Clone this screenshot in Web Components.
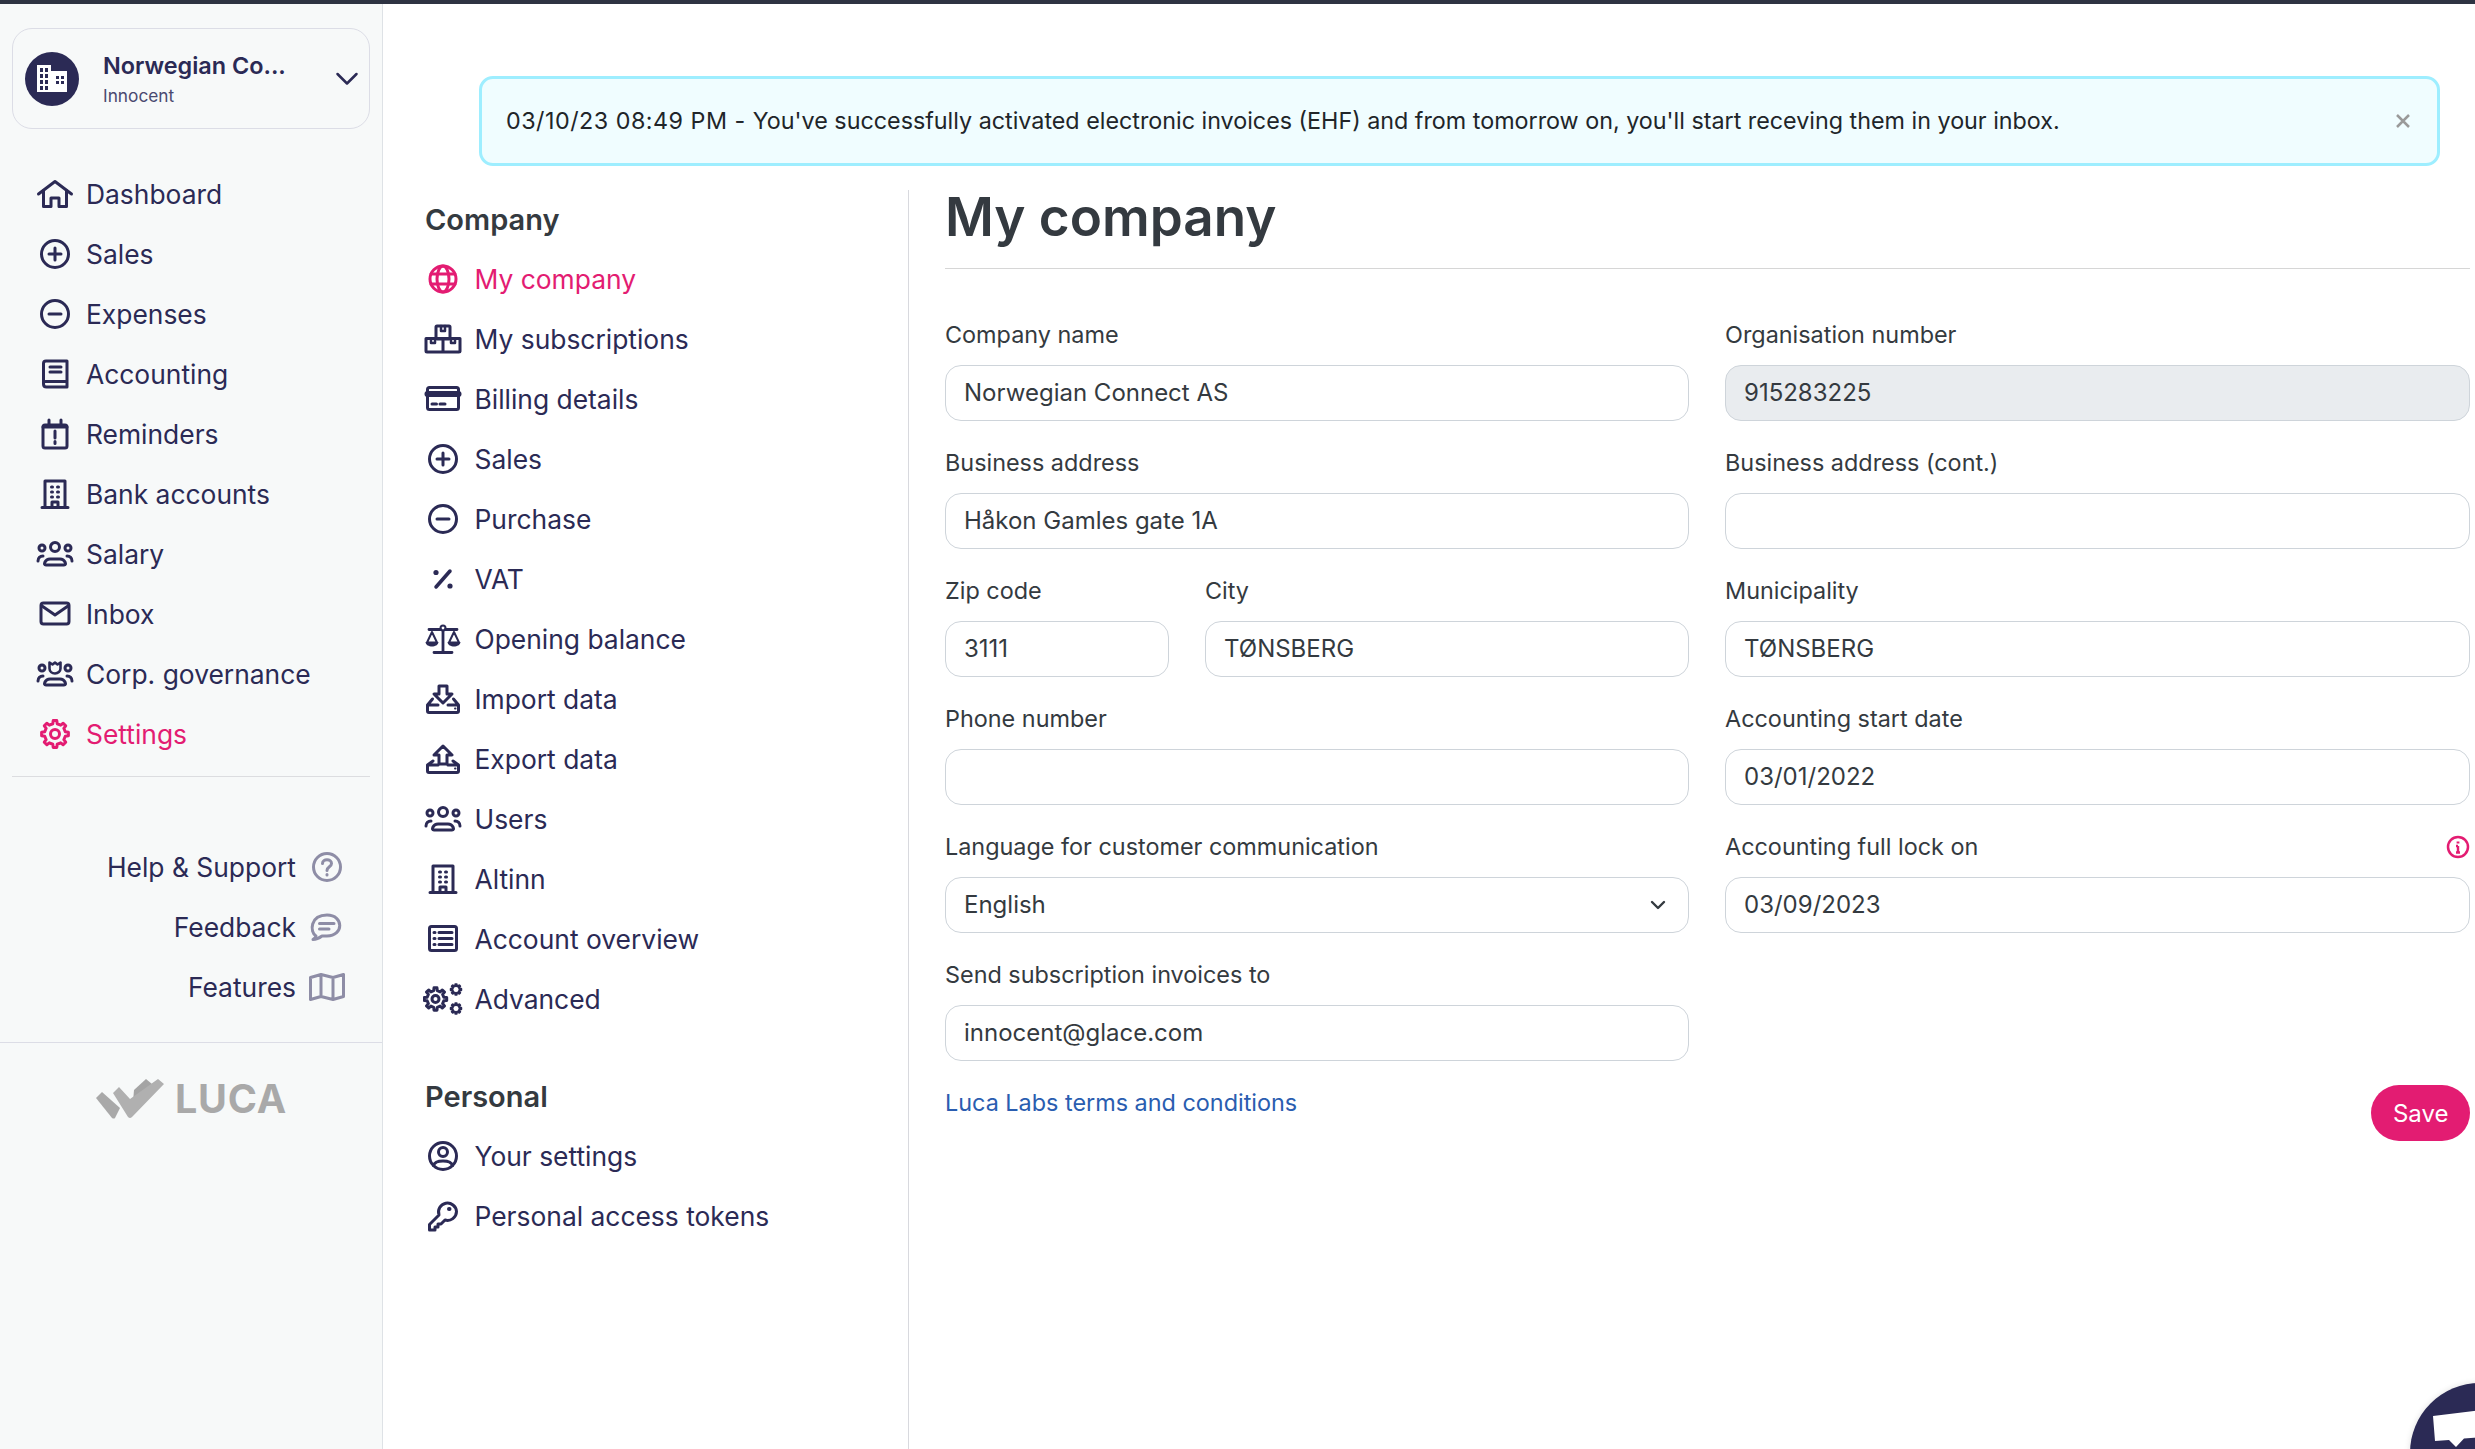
<!DOCTYPE html>
<html lang="en">
<head>
<meta charset="utf-8">
<title>My company</title>
<style>
  html, body { margin: 0; height: 100%; overflow: hidden; background: #fff; }
  body { font-family: Inter, "Liberation Sans", sans-serif; }
</style>
</head>
<body>
<luca-app></luca-app>
<script>
const gear = (cx, cy, r, t, n = 8) => {
  let d = '';
  const step = Math.PI * 2 / n;
  for (let i = 0; i < n; i++) {
    const a = i * step - Math.PI / 2;
    const pts = [[r, a - step * 0.27], [r + t, a - step * 0.17], [r + t, a + step * 0.17], [r, a + step * 0.27]];
    pts.forEach((p, k) => {
      const x = (cx + p[0] * Math.cos(p[1])).toFixed(2);
      const y = (cy + p[0] * Math.sin(p[1])).toFixed(2);
      d += (i === 0 && k === 0 ? 'M' : 'L') + x + ' ' + y + ' ';
    });
  }
  return d + 'Z';
};

const users = `<circle cx="7" cy="10" r="3"/><circle cx="33" cy="10" r="3"/>
  <path d="M3 23c0-3 2-5 5-5M37 23c0-3-2-5-5-5"/>
  <path d="M11 27c-1.500 0-2-1-1-3 1-2 3-3 5-3h10c2 0 4 1 5 3 1 2 .5 3-1 3z"/>`;

const icons = {
  home: `<path d="M3.500 16 20 3.500 36.500 16"/><path d="M8.500 12.500V28.500H16V20H24V28.500H31.500V12.500"/>`,
  plus: `<circle cx="20" cy="16" r="13.500"/><path d="M20 10V22M14 16H26"/>`,
  minus: `<circle cx="20" cy="16" r="13.500"/><path d="M14 16H26"/>`,
  book: `<path d="M8.500 26V5.500Q8.500 3 11 3H32V29H11.500Q8.500 29 8.500 26T11.500 23.500H32"/><path d="M15 9H26M15 14H26"/>`,
  calendar: `<rect x="8" y="7" width="24" height="23" rx="2"/><path d="M14 2V8M26 2V8M8 9H32" /><path d="M20 13V20M20 23.500V25.500"/>`,
  building: `<path d="M7 29.500H33M10 29V3H30V29M17 29V24H23V29"/><path d="M16.500 9H17.500M22.500 9H23.500M16.500 14H17.500M22.500 14H23.500M16.500 19H17.500M22.500 19H23.500" stroke-width="3"/>`,
  users: `<circle cx="20" cy="9" r="4.500"/>${users}`,
  envelope: `<rect x="6" y="5" width="28" height="21" rx="2.500"/><path d="M7 8 20 17 33 8"/>`,
  corp: `<path d="M14.500 4.500 17.500 6.500 20 4.500 22.500 6.500 25.500 4.500V10.500A5.500 5 0 0 1 14.500 10.500Z" stroke-width="2.600"/>${users}`,
  gear: `<path d="${gear(20, 16, 10.500, 3)}"/><circle cx="20" cy="16" r="4.500"/>`,
  globe: `<circle cx="20" cy="16" r="13"/><ellipse cx="20" cy="16" rx="6" ry="13"/><path d="M8 11H32M8 21H32"/>`,
  boxes: `<rect x="13" y="3" width="14" height="13" rx="1"/><path d="M3 15.500H37V28.500Q37 29 36 29H4Q3 29 3 28V16ZM20 16V29" stroke-width="3"/><path d="M18 3V8H22V3M8 16V20H12V16M28 16V20H32V16" stroke-width="2.500"/>`,
  card: `<rect x="4.500" y="4.500" width="31" height="22" rx="2"/><path d="M4.500 11H35.500" stroke-width="6"/><path d="M9 21H13.500M17 21H22" stroke-width="3"/>`,
  percent: `<path d="M27 8 13 24" stroke-width="3.500"/><circle cx="13" cy="9.500" r="2.600" fill="currentColor" stroke="none"/><circle cx="27" cy="23" r="2.600" fill="currentColor" stroke="none"/>`,
  scales: `<circle cx="20" cy="5" r="2.500" stroke-width="2"/><path d="M20 8V29M11 29.500H29M6 6.500H17.500M22.500 6.500H34" stroke-width="2.800"/><path d="M9 9 4 19.500H14Z M31 9 26 19.500H36Z" stroke-width="2"/><path d="M2.500 19H15.500C15 25 3 25 2.500 19ZM24.500 19H37.500C37 25 25 25 24.500 19Z" fill="currentColor" stroke="none"/>`,
  import: `<path d="M16 3H24V11H29L20 20 11 11H16Z"/><path d="M9.500 16 4.500 22V28Q4.500 29.500 6 29.500H34Q35.500 29.500 35.500 28V22L30.500 16M5 22H15M25 22H35"/><path d="M32 25.500h.5" stroke-width="2"/>`,
  export: `<path d="M20 3 29 12H24V21H16V12H11Z"/><path d="M10 18 4.500 22V28Q4.500 29.500 6 29.500H34Q35.500 29.500 35.500 28V22L30 18M5 22H15M25 22H35"/><path d="M32 25.500h.5" stroke-width="2"/>`,
  list: `<rect x="6.500" y="3.500" width="27" height="24" rx="2"/><path d="M11 9.500H12M11 15.500H12M11 21.500H12M16 9.500H29M16 15.500H29M16 21.500H29"/>`,
  advanced: `<path d="${gear(12.500, 16, 8.500, 2.800)}"/><circle cx="12.500" cy="16" r="3.500"/><path d="${gear(33, 6.500, 3.500, 1.800)}" stroke-width="2"/><path d="${gear(33, 25.500, 3.500, 1.800)}" stroke-width="2"/>`,
  user: `<circle cx="20" cy="16" r="13.500"/><circle cx="20" cy="12" r="4.500"/><path d="M10.500 25.500C12 19.500 28 19.500 29.500 25.500"/>`,
  key: `<path d="M33.500 11.500A9 9 0 1 0 16 15L6.500 24.500V30H12V27H15V24H18L22 20A9 9 0 0 0 33.500 11.500Z"/><path d="M26 9h.5" stroke-width="4"/>`,
  help: `<circle cx="20" cy="16" r="13.500"/><path d="M15.500 12.500C15.500 7.500 24.500 7.500 24.500 12.500 24.500 16 20 15.500 20 19.500M20 23.500V24"/>`,
  comment: `<path d="M9 25C2.500 21 3 4 20 4 37 4 37 25 20 25H15C13 26.500 10 28.500 6 28.500 7.500 27.500 8.500 26.500 9 25Z"/><path d="M12.500 12.500H27M12.500 18H22"/>`,
  map: `<path d="M3.500 6.500 14 3.500 26 6.500 36.500 3.500V25.500L26 28.500 14 25.500 3.500 28.500ZM14 3.500V25.500M26 6.500V28.500"/>`
};

class LucaIcon extends HTMLElement {
  connectedCallback() {
    const root = this.attachShadow({ mode: 'open' });
    root.innerHTML = `
      <style>
        :host { display: block; width: 40px; height: 32px; flex: none; }
        svg { display: block; fill: none; stroke: currentColor; stroke-width: 3; stroke-linecap: round; stroke-linejoin: round; }
      </style>
      <svg viewBox="0 0 40 32" width="40" height="32">${icons[this.getAttribute('name')] || ''}</svg>`;
  }
}

class NavItem extends HTMLElement {
  connectedCallback() {
    const root = this.attachShadow({ mode: 'open' });
    root.innerHTML = `
      <style>
        :host { display: flex; align-items: center; height: 60px; gap: var(--nav-gap, 11px); color: #2b2a55; font-size: 26.400px; }
        :host([active]) { color: #e31c72; }
      </style>
      <luca-icon name="${this.getAttribute('icon')}"></luca-icon>
      <slot></slot>`;
  }
}

class FootLink extends HTMLElement {
  connectedCallback() {
    const root = this.attachShadow({ mode: 'open' });
    root.innerHTML = `
      <style>
        :host { display: flex; align-items: center; justify-content: flex-end; height: 60px; gap: 11px; color: #2b2a55; font-size: 26.400px; }
        luca-icon { color: #8e8da6; }
      </style>
      <slot></slot>
      <luca-icon name="${this.getAttribute('icon')}"></luca-icon>`;
  }
}

class CompanySwitcher extends HTMLElement {
  connectedCallback() {
    const root = this.attachShadow({ mode: 'open' });
    root.innerHTML = `
      <style>
        :host { display: flex; align-items: center; box-sizing: border-box; height: 101px; padding: 0 10px 0 12px; border: 1px solid #dcdde6; border-radius: 20px; color: #2b2a55; }
        .avatar { width: 54px; height: 54px; border-radius: 50%; background: #2b2a55; flex: none; }
        .text { margin-left: 24px; flex: 1; }
        .name { font-size: 23.400px; font-weight: 600; line-height: 34px; }
        .sub { font-size: 17.300px; line-height: 26px; color: #4a4970; }
      </style>
      <svg class="avatar" viewBox="0 0 54 54">
        <path fill="#fff" fill-rule="evenodd" d="M12 13H26V19H42V40H12Z M15 16V20H18V16Z M20 16V20H23V16Z M15 22V26H18V22Z M20 22V26H23V22Z M15 28V32H18V28Z M20 28V32H23V28Z M15 34V38H18V34Z M20 34V38H23V34Z M31 24V27H34V24Z M36 24V27H39V24Z M31 29V32H34V29Z M36 29V32H39V29Z"/>
      </svg>
      <div class="text">
        <div class="name">Norwegian Co...</div>
        <div class="sub">Innocent</div>
      </div>
      <svg width="24" height="16" viewBox="0 0 24 16" fill="none" stroke="#2b2a55" stroke-width="2.500" stroke-linecap="round" stroke-linejoin="round"><path d="M2.500 3 12 12.500 21.500 3"/></svg>`;
  }
}

class LucaLogo extends HTMLElement {
  connectedCallback() {
    const root = this.attachShadow({ mode: 'open' });
    root.innerHTML = `
      <style>
        :host { display: flex; align-items: center; justify-content: center; gap: 10px; height: 42px; color: #a9a9a9; font-size: 39.500px; font-weight: 700; letter-spacing: .8px; }
      </style>
      <svg width="70" height="42" viewBox="0 0 70 42">
        <path fill="#a4a4a4" d="M39 12 51 1 57 6 38 24Z"/>
        <path fill="#a9a9a9" d="M1 20 7 14 25 30 20 40 Q19 41 17 40 Z"/>
        <path fill="#b0b0b0" d="M18 15 24 9 35 21 63 1 69 6 37 39 Q35 41 33 39Z"/>
      </svg>
      <span>LUCA</span>`;
  }
}

class LucaSidebar extends HTMLElement {
  connectedCallback() {
    const root = this.attachShadow({ mode: 'open' });
    root.innerHTML = `
      <style>
        :host { display: block; box-sizing: border-box; width: 383px; flex: none; background: #f7f9f9; border-right: 1px solid #dee2e6; }
        .top { padding: 24px 12px 0; }
        nav { margin-top: 35px; padding-left: 23px; }
        .rule { height: 1px; background: #dcdde0; margin-top: 12px; }
        .foot { margin-top: 60px; padding-right: 35px; }
        .rule-wide { height: 1px; background: #dcdde6; margin-top: 25px; }
        luca-logo { margin-top: 35px; }
      </style>
      <div class="top">
        <company-switcher></company-switcher>
        <nav>
          <nav-item icon="home">Dashboard</nav-item>
          <nav-item icon="plus">Sales</nav-item>
          <nav-item icon="minus">Expenses</nav-item>
          <nav-item icon="book">Accounting</nav-item>
          <nav-item icon="calendar">Reminders</nav-item>
          <nav-item icon="building">Bank accounts</nav-item>
          <nav-item icon="users">Salary</nav-item>
          <nav-item icon="envelope">Inbox</nav-item>
          <nav-item icon="corp">Corp. governance</nav-item>
          <nav-item icon="gear" active>Settings</nav-item>
        </nav>
        <div class="rule"></div>
      </div>
      <div class="foot">
        <foot-link icon="help">Help &amp; Support</foot-link>
        <foot-link icon="comment">Feedback</foot-link>
        <foot-link icon="map">Features</foot-link>
      </div>
      <div class="rule-wide"></div>
      <luca-logo></luca-logo>`;
  }
}

class AlertBanner extends HTMLElement {
  connectedCallback() {
    const root = this.attachShadow({ mode: 'open' });
    root.innerHTML = `
      <style>
        :host { display: flex; align-items: center; justify-content: space-between; box-sizing: border-box; height: 90px; padding: 0 27px 0 24px; background: #f0fdff; border: 3px solid #9eeeff; border-radius: 14px; color: #212529; font-size: 23.300px; }
        span { margin-top: -2px; }
        svg { flex: none; }
        ::slotted(time) { letter-spacing: .5px; }
      </style>
      <span><slot></slot></span>
      <svg width="14" height="14" viewBox="0 0 14 14" stroke="#9a9a9a" stroke-width="2.500"><path d="M1 1 13 13M13 1 1 13"/></svg>`;
  }
}

class SettingsMenu extends HTMLElement {
  connectedCallback() {
    const root = this.attachShadow({ mode: 'open' });
    root.innerHTML = `
      <style>
        :host { display: block; box-sizing: border-box; width: 526px; flex: none; padding-left: 42px; border-right: 1px solid #d8d9de; --nav-gap: 11.500px; }
        h3 { margin: 0; height: 59px; line-height: 60px; color: #343a40; font-size: 29px; font-weight: 600; }
        nav-item { margin-left: -2px; }
        .personal { margin-top: 38px; }
      </style>
      <h3>Company</h3>
      <nav-item icon="globe" active>My company</nav-item>
      <nav-item icon="boxes">My subscriptions</nav-item>
      <nav-item icon="card">Billing details</nav-item>
      <nav-item icon="plus">Sales</nav-item>
      <nav-item icon="minus">Purchase</nav-item>
      <nav-item icon="percent">VAT</nav-item>
      <nav-item icon="scales">Opening balance</nav-item>
      <nav-item icon="import">Import data</nav-item>
      <nav-item icon="export">Export data</nav-item>
      <nav-item icon="users">Users</nav-item>
      <nav-item icon="building">Altinn</nav-item>
      <nav-item icon="list">Account overview</nav-item>
      <nav-item icon="advanced">Advanced</nav-item>
      <h3 class="personal">Personal</h3>
      <nav-item icon="user">Your settings</nav-item>
      <nav-item icon="key">Personal access tokens</nav-item>`;
  }
}

class FormField extends HTMLElement {
  connectedCallback() {
    const root = this.attachShadow({ mode: 'open' });
    const value = this.getAttribute('value') || '';
    const chevron = this.hasAttribute('select')
      ? `<svg class="chev" width="16" height="10" viewBox="0 0 16 10" fill="none" stroke="#343a40" stroke-width="2.400" stroke-linecap="round" stroke-linejoin="round"><path d="M2 2 8 8 14 2"/></svg>`
      : '';
    const info = this.hasAttribute('info')
      ? `<svg width="24" height="24" viewBox="0 0 24 24" fill="none" stroke="#e31c72" stroke-width="2.500"><circle cx="12" cy="12" r="10"/><path d="M12 11V17M10 11H12M10 17.500H14" stroke-width="2.400"/><path d="M12 6.500V8.500" stroke-width="2.800"/></svg>`
      : '';
    root.innerHTML = `
      <style>
        :host { display: block; min-width: 0; }
        .label { display: flex; justify-content: space-between; align-items: center; height: 31px; margin-bottom: 15px; color: #343a40; font-size: 23.400px; }
        .box { display: flex; align-items: center; justify-content: space-between; box-sizing: border-box; height: 56px; padding: 0 18px 1px; background: #fff; border: 1px solid #ced4da; border-radius: 16px; color: #343a40; font-size: 24px; }
        .chev { margin-right: 4px; }
        :host([disabled]) .box { background: #e9ecef; }
      </style>
      <div class="label"><span>${this.getAttribute('label')}</span>${info}</div>
      <div class="box"><span>${value}</span>${chevron}</div>`;
  }
}

class CompanyForm extends HTMLElement {
  connectedCallback() {
    const root = this.attachShadow({ mode: 'open' });
    root.innerHTML = `
      <style>
        :host { display: block; flex: 1; min-width: 0; padding: 0 5px 0 36px; }
        h1 { margin: 0; height: 78px; line-height: 54px; border-bottom: 1px solid #d6d6d6; color: #343a40; font-size: 53px; font-weight: 600; }
        .grid { display: grid; grid-template-columns: 744px 1fr; gap: 26px 36px; margin-top: 50px; }
        .pair { display: grid; grid-template-columns: 224px 1fr; gap: 36px; }
        .first { grid-column: 1; }
        .foot { display: flex; justify-content: space-between; align-items: flex-start; margin-top: 24px; }
        .terms { color: #2a5db0; font-size: 23.400px; line-height: 35px; }
        .save { display: flex; align-items: center; height: 56px; padding: 0 21.500px; border-radius: 28px; background: #e31c72; color: #fff; font-size: 24px; }
      </style>
      <h1>My company</h1>
      <div class="grid">
        <form-field label="Company name" value="Norwegian Connect AS"></form-field>
        <form-field label="Organisation number" value="915283225" disabled></form-field>
        <form-field label="Business address" value="Håkon Gamles gate 1A"></form-field>
        <form-field label="Business address (cont.)"></form-field>
        <div class="pair">
          <form-field label="Zip code" value="3111"></form-field>
          <form-field label="City" value="TØNSBERG"></form-field>
        </div>
        <form-field label="Municipality" value="TØNSBERG"></form-field>
        <form-field label="Phone number"></form-field>
        <form-field label="Accounting start date" value="03/01/2022"></form-field>
        <form-field label="Language for customer communication" value="English" select></form-field>
        <form-field label="Accounting full lock on" value="03/09/2023" info></form-field>
        <form-field class="first" label="Send subscription invoices to" value="innocent@glace.com"></form-field>
      </div>
      <div class="foot">
        <span class="terms">Luca Labs terms and conditions</span>
        <span class="save">Save</span>
      </div>`;
  }
}

class ChatLauncher extends HTMLElement {
  connectedCallback() {
    const root = this.attachShadow({ mode: 'open' });
    root.innerHTML = `
      <style>
        :host { position: fixed; left: 2410px; top: 1383px; width: 140px; height: 140px; border-radius: 50%; background: #2b2a55; box-shadow: 0 0 6px rgba(0,0,0,.12); }
        svg { position: absolute; left: 20px; top: 26px; }
      </style>
      <svg width="70" height="50" viewBox="0 0 70 50"><path fill="#fff" d="M3 7 52 1 54 28 34 29.500 26 38 19 31 5 32Z"/></svg>`;
  }
}

class LucaApp extends HTMLElement {
  connectedCallback() {
    const root = this.attachShadow({ mode: 'open' });
    root.innerHTML = `
      <style>
        :host { display: flex; flex-direction: column; height: 100vh; overflow: hidden; font-family: Inter, "Liberation Sans", sans-serif; }
        .bar { height: 4px; background: #2e3342; flex: none; }
        .body { display: flex; flex: 1; min-height: 0; }
        main { display: flex; flex-direction: column; flex: 1; min-width: 0; }
        alert-banner { margin: 72px 35px 24px 96px; }
        .cols { display: flex; flex: 1; }
      </style>
      <div class="bar"></div>
      <div class="body">
        <luca-sidebar></luca-sidebar>
        <main>
          <alert-banner><time>03/10/23 08:49 PM - </time>You've successfully activated electronic invoices (EHF) and from tomorrow on, you'll start receving them in your inbox.</alert-banner>
          <div class="cols">
            <settings-menu></settings-menu>
            <company-form></company-form>
          </div>
        </main>
      </div>
      <chat-launcher></chat-launcher>`;
  }
}

customElements.define('luca-icon', LucaIcon);
customElements.define('nav-item', NavItem);
customElements.define('foot-link', FootLink);
customElements.define('company-switcher', CompanySwitcher);
customElements.define('luca-logo', LucaLogo);
customElements.define('luca-sidebar', LucaSidebar);
customElements.define('alert-banner', AlertBanner);
customElements.define('settings-menu', SettingsMenu);
customElements.define('form-field', FormField);
customElements.define('company-form', CompanyForm);
customElements.define('chat-launcher', ChatLauncher);
customElements.define('luca-app', LucaApp);
</script>
</body>
</html>
